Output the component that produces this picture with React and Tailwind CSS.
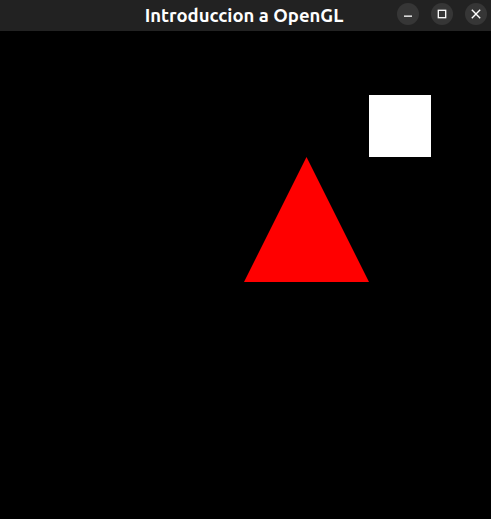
import React from 'react';

const TitleButton = ({ children }) => (
  <div className="w-[22px] h-[22px] rounded-full bg-[#363636] flex items-center justify-center text-white">
    {children}
  </div>
);

const App = () => {
  return (
    <div className="w-[491px] h-[519px] flex flex-col bg-black overflow-hidden">
      {/* Title bar */}
      <div className="relative h-[31px] shrink-0 bg-[#222222] flex items-start justify-center">
        <span className="mt-[5px] ml-[-3px] text-white font-bold text-[18.5px] leading-[20px] font-['Ubuntu','Noto_Sans',sans-serif]">
          Introduccion a OpenGL
        </span>
        <div className="absolute right-[4px] top-[2.5px] flex gap-[12px]">
          <TitleButton>
            <svg width="10" height="10" viewBox="0 0 10 10">
              <rect x="1" y="6.5" width="8" height="1.3" fill="currentColor" />
            </svg>
          </TitleButton>
          <TitleButton>
            <svg width="10" height="10" viewBox="0 0 10 10">
              <rect x="1.3" y="1.3" width="7.4" height="7.4" fill="none" stroke="currentColor" strokeWidth="1.3" />
            </svg>
          </TitleButton>
          <TitleButton>
            <svg width="10" height="10" viewBox="0 0 10 10">
              <path d="M0.8 0.8L9.2 9.2M9.2 0.8L0.8 9.2" stroke="currentColor" strokeWidth="1.4" />
            </svg>
          </TitleButton>
        </div>
      </div>

      {/* GL canvas */}
      <div className="flex-1">
        <svg width="491" height="488" viewBox="0 0 491 488" className="block">
          <rect x="369" y="64" width="62" height="62" fill="#ffffff" />
          <polygon points="306.5,126 244,251 369,251" fill="#ff0000" />
        </svg>
      </div>
    </div>
  );
};

export default App;
